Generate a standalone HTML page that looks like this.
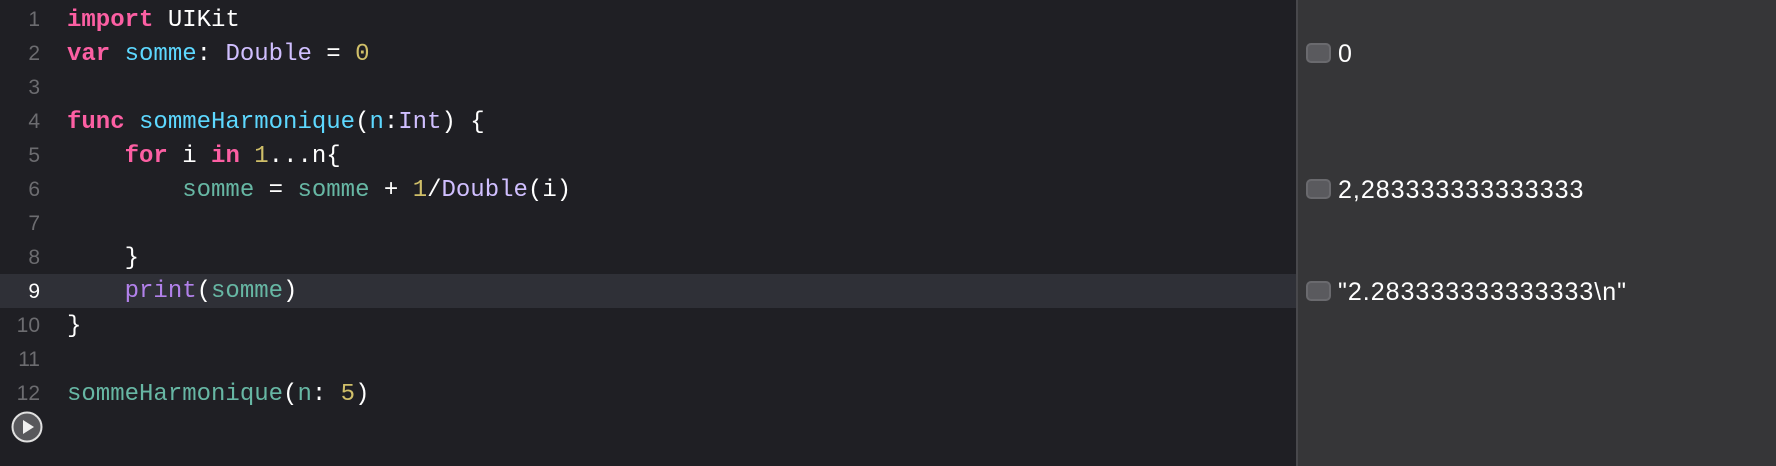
<!DOCTYPE html>
<html><head><style>
html,body{margin:0;padding:0;width:1776px;height:466px;overflow:hidden;background:#1f1f24;}
#ed{position:absolute;left:0;top:0;width:1296px;height:466px;background:#1f1f24;}
#div{position:absolute;left:1296px;top:0;width:2px;height:466px;background:#48484c;}
#rp{position:absolute;left:1298px;top:0;width:478px;height:466px;background:#363638;}
.ln{position:absolute;left:0;width:40px;text-align:right;font:21px "Liberation Sans",sans-serif;color:#6c6c70;height:34px;line-height:34px;}
.cl{position:absolute;left:67px;font:24px "Liberation Mono",monospace;color:#fff;height:34px;line-height:34px;white-space:pre;}
.hl{position:absolute;left:0;top:274px;width:1296px;height:34px;background:#2f3037;}
.k{color:#fc5fa3;font-weight:bold}.t{color:#d0bfff}.d{color:#5dd8ff}.o{color:#67b7a4}.n{color:#d0bf69}.p{color:#b281eb}
.r{position:absolute;left:1306px;height:34px;line-height:34px;font:25px "Liberation Sans",sans-serif;letter-spacing:1px;color:#fff;}
.r i{display:inline-block;width:21px;height:16px;border:2px solid #6a6a6e;border-radius:5px;background:#5a5a5e;vertical-align:middle;margin-right:7px;position:relative;top:-2px;box-sizing:content-box}
</style></head><body>
<div id="ed">
<div class="hl"></div>
<div class="ln" style="top:3px">1</div><div class="ln" style="top:37px">2</div><div class="ln" style="top:71px">3</div><div class="ln" style="top:105px">4</div><div class="ln" style="top:139px">5</div><div class="ln" style="top:173px">6</div><div class="ln" style="top:207px">7</div><div class="ln" style="top:241px">8</div><div class="ln" style="top:275px;color:#fff">9</div><div class="ln" style="top:309px">10</div><div class="ln" style="top:343px">11</div><div class="ln" style="top:377px">12</div>
<div class="cl" style="top:4px"><span class="k">import</span> UIKit</div>
<div class="cl" style="top:38px"><span class="k">var</span> <span class="d">somme</span>: <span class="t">Double</span> = <span class="n">0</span></div>
<div class="cl" style="top:106px"><span class="k">func</span> <span class="d">sommeHarmonique</span>(<span class="d">n</span>:<span class="t">Int</span>) {</div>
<div class="cl" style="top:140px">    <span class="k">for</span> i <span class="k">in</span> <span class="n">1</span>...n{</div>
<div class="cl" style="top:174px">        <span class="o">somme</span> = <span class="o">somme</span> + <span class="n">1</span>/<span class="t">Double</span>(i)</div>
<div class="cl" style="top:242px">    }</div>
<div class="cl" style="top:275px">    <span class="p">print</span>(<span class="o">somme</span>)</div>
<div class="cl" style="top:310px">}</div>
<div class="cl" style="top:378px"><span class="o">sommeHarmonique</span>(<span class="o">n</span>: <span class="n">5</span>)</div>
<svg style="position:absolute;left:11px;top:411px" width="32" height="32"><circle cx="16" cy="16" r="14.5" fill="#58585c" stroke="#e0e0e0" stroke-width="2"/><path d="M12 9 L23 16 L12 23 Z" fill="#f0f0f0"/></svg>
</div>
<div id="div"></div>
<div id="rp"></div>
<div class="r" style="top:40px"><i></i>0</div>
<div class="r" style="top:176px"><i></i>2,283333333333333</div>
<div class="r" style="top:278px"><i></i>"2.283333333333333\n"</div>
</body></html>
